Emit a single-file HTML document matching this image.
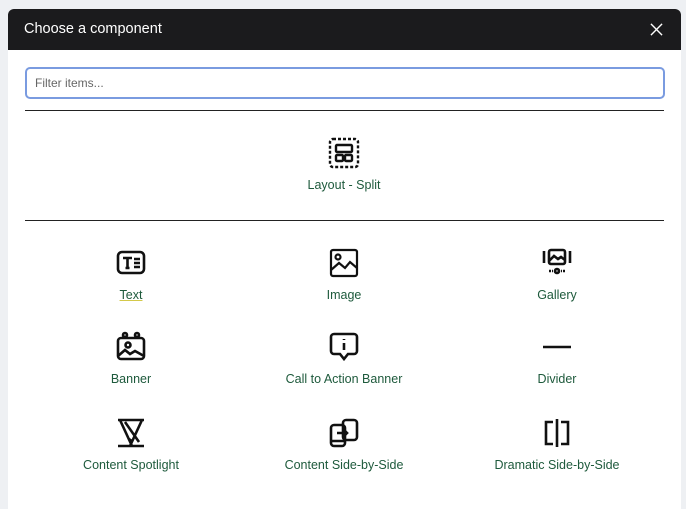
<!DOCTYPE html>
<html><head><style>
body{margin:0;width:686px;height:501px;background:#eef0f3;font-family:"Liberation Sans",sans-serif;overflow:hidden;position:relative}
.modal{position:absolute;left:8px;top:9px;width:673px;height:500px;background:#fff;border-radius:6px 6px 0 0;overflow:hidden}
.hdr{height:41px;background:#1b1b1d;color:#fff;font-size:14.5px;line-height:41px;padding-left:16px;position:relative}
.x{position:absolute;right:18px;top:14px}
.inp{position:absolute;left:17px;top:58px;width:628px;height:28px;border:2px solid #7a9be0;border-radius:5px;font-size:12px;color:#666;line-height:28px;padding-left:8px;box-sizing:content-box}
.hr{position:absolute;left:17px;width:639px;height:1px;background:#222}
.it{position:absolute;width:200px;text-align:center;font-size:12.5px;color:#1e5a3c}
.it svg{display:block;margin:0 auto 9px}
</style></head><body>
<div class="modal">
<div class="hdr">Choose a component<svg class="x" width="13" height="13" viewBox="0 0 14 14"><path d="M1 1L13 13M13 1L1 13" stroke="#fff" stroke-width="1.5"/></svg></div>
<div class="inp">Filter items...</div>
<div class="hr" style="top:101px"></div>
<div class="it" style="left:236px;top:128px"><svg width="32" height="32" viewBox="0 0 32 32" fill="none" stroke="#111" stroke-width="2.4"><rect x="2" y="2" width="28" height="28" rx="3" stroke-dasharray="3 2"/><rect x="8" y="8" width="16" height="7" rx="1"/><rect x="8" y="18" width="7" height="6" rx="1"/><rect x="17" y="18" width="7" height="6" rx="1"/></svg>Layout - Split</div>
<div class="hr" style="top:211px"></div>
<div class="it" style="left:23px;top:238px"><svg width="32" height="32" viewBox="0 0 32 32" fill="none" stroke="#111" stroke-width="2.6"><rect x="3" y="5" width="26" height="21" rx="4"/><path d="M8 11h9M12.5 11v10M10.5 21h4M19 12h6M19 16h6M19 20h6"/></svg><span style="text-decoration:underline;text-decoration-color:#d4c94a">Text</span></div>
<div class="it" style="left:236px;top:238px"><svg width="32" height="32" viewBox="0 0 32 32" fill="none" stroke="#111" stroke-width="2.2"><rect x="3" y="3" width="26" height="26" rx="2"/><circle cx="10" cy="10" r="2.5"/><path d="M3 23l8-7 6 5 5-6 7 6"/></svg>Image</div>
<div class="it" style="left:449px;top:238px"><svg width="32" height="32" viewBox="0 0 32 32" fill="none" stroke="#111" stroke-width="2.6"><path d="M3 4v12M29 4v12"/><rect x="8" y="3" width="16" height="14" rx="2"/><path d="M8 14l5-5 4 3 3-2 4 3"/><circle cx="16" cy="24" r="2"/><path d="M8 24h2M11 24h1M20 24h1M22 24h2"/></svg>Gallery</div>
<div class="it" style="left:23px;top:322px"><svg width="32" height="32" viewBox="0 0 32 32" fill="none" stroke="#111" stroke-width="2.6"><rect x="3" y="7" width="26" height="21" rx="3"/><circle cx="10" cy="4" r="2"/><circle cx="22" cy="4" r="2"/><circle cx="13" cy="14" r="2.5"/><path d="M3 25l7-6 5 4 5-3 9 5"/></svg>Banner</div>
<div class="it" style="left:236px;top:322px"><svg width="32" height="32" viewBox="0 0 32 32" fill="none" stroke="#111" stroke-width="2.6"><path d="M6 3h20a3 3 0 0 1 3 3v14a3 3 0 0 1-3 3h-6l-4 5-4-5H6a3 3 0 0 1-3-3V6a3 3 0 0 1 3-3z"/><path d="M16 12v7M16 8v1"/></svg>Call to Action Banner</div>
<div class="it" style="left:449px;top:322px"><svg width="32" height="32" viewBox="0 0 32 32"><path d="M2 16h28" stroke="#111" stroke-width="2.6"/></svg>Divider</div>
<div class="it" style="left:23px;top:408px"><svg width="32" height="32" viewBox="0 0 32 32" fill="none" stroke="#111" stroke-width="2.6"><path d="M3 3h26M3 29h26M5 3l12 26M27 3l-12 26M10 5l14 20M14 22l4 3"/></svg>Content Spotlight</div>
<div class="it" style="left:236px;top:408px"><svg width="32" height="32" viewBox="0 0 32 32" fill="none" stroke="#111" stroke-width="2.6"><rect x="3" y="8" width="14" height="21" rx="3"/><rect x="15" y="3" width="14" height="20" rx="3"/><path d="M9 16h10M16 13l3 3-3 3M3 24h14"/></svg>Content Side-by-Side</div>
<div class="it" style="left:449px;top:408px"><svg width="32" height="32" viewBox="0 0 32 32" fill="none" stroke="#111" stroke-width="2.6"><path d="M12 5H5v22h7M20 5h7v22h-7M16 2v28"/></svg>Dramatic Side-by-Side</div>
</div>
</body></html>
